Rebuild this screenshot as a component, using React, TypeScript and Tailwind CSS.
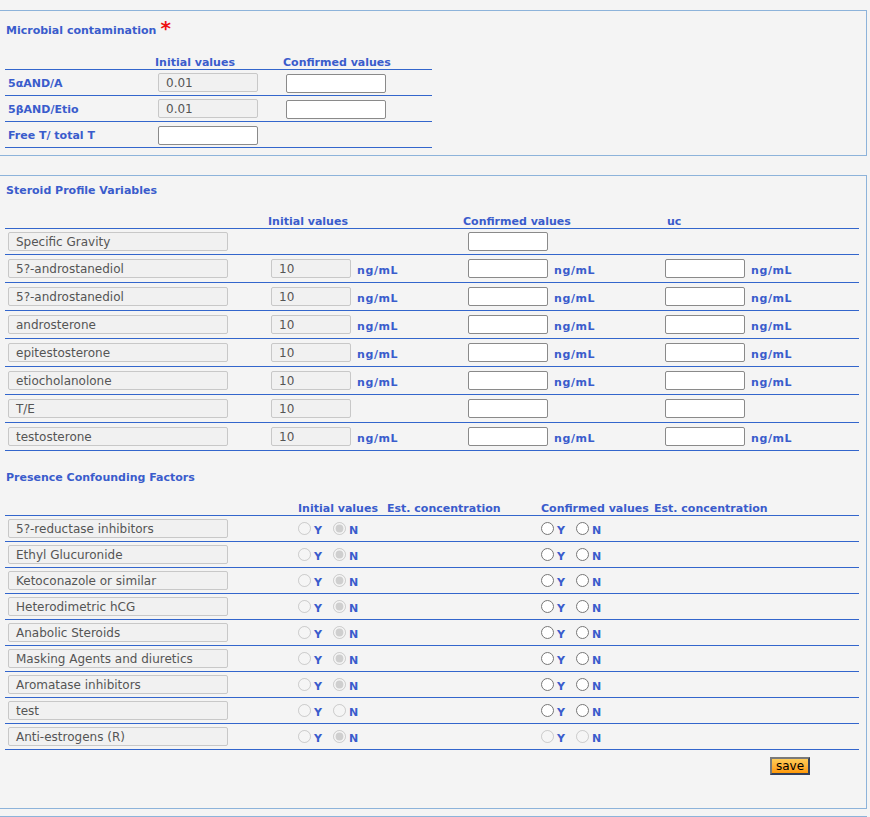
import React from "react";

const LINE = "border-[#3366cc]";
const BLUE = "text-[#3a5ccc]";

const steroidRows = [
  { name: "Specific Gravity", gravity: true },
  { name: "5?-androstanediol", init: "10", unit: true },
  { name: "5?-androstanediol", init: "10", unit: true },
  { name: "androsterone", init: "10", unit: true },
  { name: "epitestosterone", init: "10", unit: true },
  { name: "etiocholanolone", init: "10", unit: true },
  { name: "T/E", init: "10", unit: false },
  { name: "testosterone", init: "10", unit: true },
];

const factors = [
  { name: "5?-reductase inhibitors", initN: true, confOff: false },
  { name: "Ethyl Glucuronide", initN: true, confOff: false },
  { name: "Ketoconazole or similar", initN: true, confOff: false },
  { name: "Heterodimetric hCG", initN: true, confOff: false },
  { name: "Anabolic Steroids", initN: true, confOff: false },
  { name: "Masking Agents and diuretics", initN: true, confOff: false },
  { name: "Aromatase inhibitors", initN: true, confOff: false },
  { name: "test", initN: false, confOff: false },
  { name: "Anti-estrogens (R)", initN: true, confOff: true },
];

function ReadBox({ children, wide }: { children: React.ReactNode; wide?: boolean }) {
  return (
    <div
      className={`flex h-[19px] items-center rounded-[2px] border border-[#c8c8c8] bg-[#f1f1f1] pl-[7px] text-[12px] leading-[14px] text-[#555] ${
        wide ? "w-[220px]" : "w-[80px]"
      }`}
    >
      {children}
    </div>
  );
}

function TextBox({ w = "w-[80px]" }: { w?: string }) {
  return (
    <input
      type="text"
      className={`h-[19px] ${w} rounded-[2px] border border-[#8a8a8a] bg-white text-[12px]`}
    />
  );
}

function Unit() {
  return (
    <span className={`ml-[6px] mt-[3px] text-[11px] font-bold leading-[13px] tracking-[0.6px] ${BLUE}`}>
      ng/mL
    </span>
  );
}

function YesNo({ name, checkedN, disabled }: { name: string; checkedN: boolean; disabled: boolean }) {
  return (
    <div className={`flex items-center pt-[3px] text-[11px] font-bold leading-[13px] ${BLUE}`}>
      <input type="radio" name={name} disabled={disabled} className="mb-[3px] h-[13px] w-[13px]" />
      <span className="ml-[3px]">Y</span>
      <input
        type="radio"
        name={name}
        disabled={disabled}
        defaultChecked={checkedN}
        className="mb-[3px] ml-[11px] h-[13px] w-[13px]"
      />
      <span className="ml-[3px]">N</span>
    </div>
  );
}

export default function App() {
  return (
    <div className="min-h-screen bg-[#f4f4f4] pt-[10px] font-['DejaVu_Sans',Verdana,sans-serif]">
      {/* Microbial contamination */}
      <div className="mr-[3px] border-y border-r border-[#8db3da] pb-[7px]">
        <div className={`flex pl-[6px] pt-[13px] text-[11px] font-bold leading-[13px] ${BLUE}`}>
          <span>Microbial contamination</span>
          <span className="-mt-[2px] ml-[4px] h-[13px] text-[20px] leading-[13px] text-[#ee1111]">*</span>
        </div>
        <div className="ml-[5px] mt-[19px] w-[427px]">
          <div className={`flex border-b ${LINE} pt-[1px] text-[11px] font-bold leading-[12px] ${BLUE}`}>
            <div className="w-[150px]" />
            <div className="w-[128px]">Initial values</div>
            <div>Confirmed values</div>
          </div>
          {[
            { label: "5αAND/A", init: "0.01" },
            { label: "5βAND/Etio", init: "0.01" },
            { label: "Free T/ total T", init: null },
          ].map((r) => (
            <div key={r.label} className={`flex h-[26px] items-center border-b ${LINE}`}>
              <div className={`w-[150px] pl-[3px] pt-[2px] text-[11px] font-bold leading-[13px] ${BLUE}`}>
                {r.label}
              </div>
              <div className="w-[128px] pl-[3px]">
                {r.init ? (
                  <div className="flex h-[19px] w-[100px] items-center rounded-[2px] border border-[#c8c8c8] bg-[#f1f1f1] pl-[7px] text-[12px] text-[#555]">
                    {r.init}
                  </div>
                ) : (
                  <TextBox w="w-[100px]" />
                )}
              </div>
              {r.init && (
                <div className="pl-[3px]">
                  <TextBox w="w-[100px]" />
                </div>
              )}
            </div>
          ))}
        </div>
      </div>

      {/* Steroid profile + confounding factors */}
      <div className="mr-[3px] mt-[19px] border-y border-r border-[#8db3da] pb-[33px]">
        <div className={`pl-[6px] pt-[8px] text-[11px] font-bold leading-[13px] ${BLUE}`}>
          Steroid Profile Variables
        </div>
        <div className="ml-[5px] mt-[18px] w-[854px]">
          <div className={`flex border-b ${LINE} pt-[1px] text-[11px] font-bold leading-[12px] ${BLUE}`}>
            <div className="w-[263px]" />
            <div className="w-[195px]">Initial values</div>
            <div className="w-[204px]">Confirmed values</div>
            <div>uc</div>
          </div>
          {steroidRows.map((r, i) => (
            <div
              key={i}
              className={`flex items-center border-b ${LINE} ${r.gravity ? "h-[26px]" : "h-[28px]"}`}
            >
              <div className="w-[263px] pl-[3px]">
                <ReadBox wide>{r.name}</ReadBox>
              </div>
              <div className="flex w-[195px] items-center pl-[3px]">
                {r.init && <ReadBox>{r.init}</ReadBox>}
                {r.unit && <Unit />}
              </div>
              <div className="flex w-[200px] items-center pl-[5px]">
                <TextBox />
                {r.unit && <Unit />}
              </div>
              {!r.gravity && (
                <div className="flex items-center pl-[2px]">
                  <TextBox />
                  {r.unit && <Unit />}
                </div>
              )}
            </div>
          ))}
        </div>

        <div className={`ml-[6px] mt-[20px] text-[11px] font-bold leading-[13px] ${BLUE}`}>
          Presence Confounding Factors
        </div>
        <div className="ml-[5px] mt-[18px] w-[854px]">
          <div className={`flex border-b ${LINE} pt-[1px] text-[11px] font-bold leading-[12px] ${BLUE}`}>
            <div className="w-[293px]" />
            <div className="w-[89px]">Initial values</div>
            <div className="w-[154px]">Est. concentration</div>
            <div className="w-[113px]">Confirmed values</div>
            <div>Est. concentration</div>
          </div>
          {factors.map((f, i) => (
            <div key={i} className={`flex h-[26px] items-center border-b ${LINE}`}>
              <div className="w-[293px] pl-[3px]">
                <ReadBox wide>{f.name}</ReadBox>
              </div>
              <div className="w-[243px]">
                <YesNo name={`init-${i}`} checkedN={f.initN} disabled />
              </div>
              <div>
                <YesNo name={`conf-${i}`} checkedN={false} disabled={f.confOff} />
              </div>
            </div>
          ))}
        </div>

        <div className="mt-[7px] flex justify-end pr-[56px]">
          <button
            type="button"
            className="h-[18px] w-[40px] border-2 border-b-[#34405a] border-l-[#7a7a7a] border-r-[#34405a] border-t-[#7a7a7a] bg-gradient-to-b from-[#ffcc55] to-[#ff9900] text-[12px] leading-[14px] text-black"
          >
            save
          </button>
        </div>
      </div>

      <div className="mr-[3px] mt-[7px] h-[1px] border-t border-[#8db3da]" />
    </div>
  );
}
